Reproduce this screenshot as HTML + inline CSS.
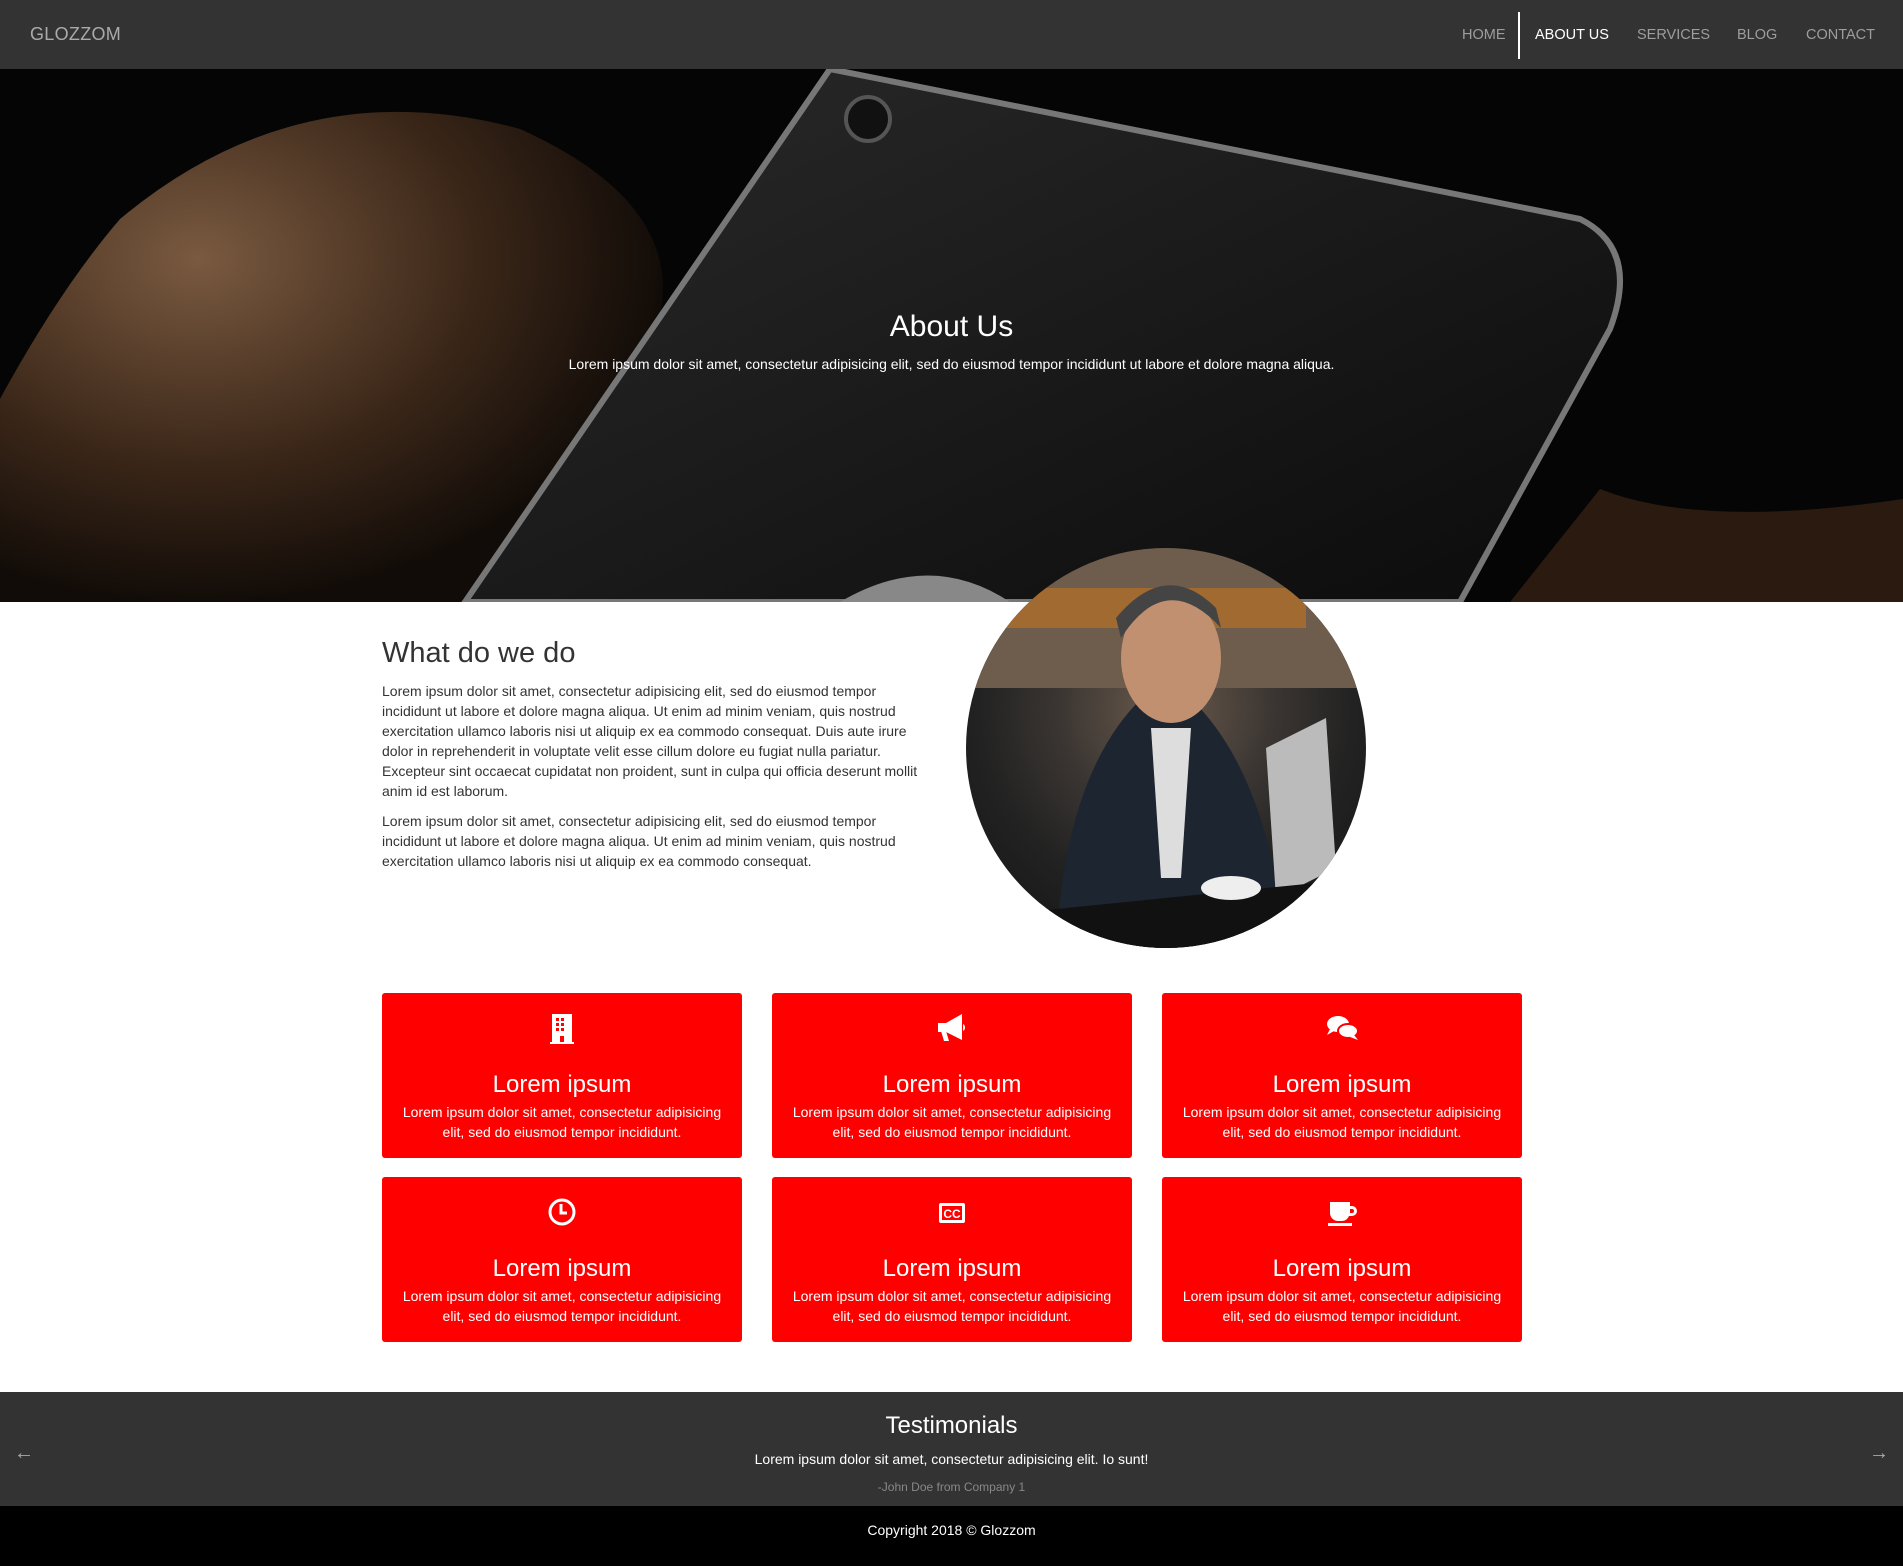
<!DOCTYPE html>
<html><head><meta charset="utf-8"><style>
*{margin:0;padding:0;box-sizing:border-box}
body{width:1903px;height:1566px;overflow:hidden;font-family:"Liberation Sans",Arial,sans-serif;background:#fff;position:relative}
.nav{position:absolute;top:0;left:0;width:1903px;height:69px;background:#333}
.logo{position:absolute;left:30px;top:24px;font-size:18px;color:#aaa;letter-spacing:.3px}
.nav a{position:absolute;top:27px;font-size:14.5px;color:#9d9d9d;text-decoration:none}
.bar{position:absolute;left:1518px;top:12px;width:2px;height:47px;background:#fff}
.hero{position:absolute;top:69px;left:0;width:1903px;height:533px;background:#050505;overflow:hidden}
.hero h1{position:absolute;top:241px;width:100%;text-align:center;color:#fff;font-weight:normal;font-size:30px}
.hero p{position:absolute;top:287px;width:100%;text-align:center;color:#fff;font-size:14px}
.sec h2{position:absolute;left:382px;top:637px;font-weight:normal;font-size:29px;color:#333}
.txt{position:absolute;left:382px;width:540px;font-size:14px;line-height:20px;color:#333}
.circ{position:absolute;left:966px;top:548px;width:400px;height:400px;border-radius:50%;overflow:hidden;background:radial-gradient(circle at 50% 40%,#6b5a4c 0,#3a3532 35%,#222 60%,#111 100%)}
.card{position:absolute;width:360px;height:165px;background:#f00;border-radius:3px;color:#fff;text-align:center}
.card svg{position:absolute;top:17px;left:162px}
.card h3{position:absolute;top:78px;width:100%;font-weight:normal;font-size:24px}
.card p{position:absolute;top:109px;left:10px;right:10px;font-size:14px;line-height:20px}
.test{position:absolute;top:1392px;left:0;width:1903px;height:114px;background:#333;color:#fff;text-align:center}
.foot{position:absolute;top:1506px;left:0;width:1903px;height:60px;background:#000;color:#fff;text-align:center;font-size:14px}
</style></head><body>
<div class="nav"><div class="logo">GLOZZOM</div>
<a style="left:1462px">HOME</a><div class="bar"></div><a style="left:1535px;color:#fff">ABOUT US</a><a style="left:1637px">SERVICES</a><a style="left:1737px">BLOG</a><a style="left:1806px">CONTACT</a></div>
<div class="hero">
<svg width="1903" height="533" style="position:absolute;left:0;top:0">
<defs><radialGradient id="r" cx="0.3" cy="0.3" r="0.7"><stop offset="0" stop-color="#7a5a40"/><stop offset="0.6" stop-color="#3a2618"/><stop offset="1" stop-color="#120c08"/></radialGradient>
<linearGradient id="p" x1="0" y1="0" x2="1" y2="1"><stop offset="0" stop-color="#2a2a2a"/><stop offset="1" stop-color="#0b0b0b"/></linearGradient></defs>
<path d="M120 150 Q300 0 520 60 Q720 150 640 300 Q600 420 500 533 L0 533 L0 330 Q60 220 120 150Z" fill="url(#r)"/>
<path d="M830 0 L1580 150 Q1640 180 1610 260 L1460 533 L465 533 Z" fill="url(#p)" stroke="#777" stroke-width="6"/>
<circle cx="868" cy="50" r="22" fill="#111" stroke="#555" stroke-width="4"/>
<path d="M1510 533 L1600 420 Q1700 460 1903 430 L1903 533Z" fill="#2a1a10"/>
<path d="M840 533 Q930 480 1010 533Z" fill="#888"/>
</svg>
<h1>About Us</h1>
<p>Lorem ipsum dolor sit amet, consectetur adipisicing elit, sed do eiusmod tempor incididunt ut labore et dolore magna aliqua.</p></div>
<div class="sec"><h2>What do we do</h2>
<div class="txt" style="top:681px">Lorem ipsum dolor sit amet, consectetur adipisicing elit, sed do eiusmod tempor incididunt ut labore et dolore magna aliqua. Ut enim ad minim veniam, quis nostrud exercitation ullamco laboris nisi ut aliquip ex ea commodo consequat. Duis aute irure dolor in reprehenderit in voluptate velit esse cillum dolore eu fugiat nulla pariatur. Excepteur sint occaecat cupidatat non proident, sunt in culpa qui officia deserunt mollit anim id est laborum.</div>
<div class="txt" style="top:811px">Lorem ipsum dolor sit amet, consectetur adipisicing elit, sed do eiusmod tempor incididunt ut labore et dolore magna aliqua. Ut enim ad minim veniam, quis nostrud exercitation ullamco laboris nisi ut aliquip ex ea commodo consequat.</div></div>
<div class="circ"><svg width="400" height="400">
<rect x="0" y="0" width="400" height="140" fill="#6e5c4c"/><rect x="40" y="40" width="300" height="40" fill="#a06a30"/>
<path d="M90 400 Q100 200 200 130 Q300 200 320 400Z" fill="#1c2530"/>
<ellipse cx="205" cy="110" rx="50" ry="65" fill="#c09070"/><path d="M155 90 Q200 20 255 80 L250 60 Q200 10 150 70Z" fill="#444"/>
<path d="M185 180 L225 180 L215 330 L195 330Z" fill="#ddd"/>
<path d="M300 200 L360 170 L370 320 L310 350Z" fill="#bbb"/>
<path d="M0 370 L400 330 L400 400 L0 400Z" fill="#111"/>
<ellipse cx="265" cy="340" rx="30" ry="12" fill="#eee"/>
</svg></div>
<div class="card" style="left:382px;top:993px"><svg width="36" height="36" viewBox="0 0 36 36" fill="#fff"><path d="M8 4h20v28h2v2H6v-2h2zM12 8v3h3V8zM17 8v3h3V8zM12 13v3h3v-3zM17 13v3h3v-3zM12 18v3h3v-3zM17 18v3h3v-3zM16 26v6h4v-6z" fill-rule="evenodd"/></svg><h3>Lorem ipsum</h3><p>Lorem ipsum dolor sit amet, consectetur adipisicing elit, sed do eiusmod tempor incididunt.</p></div>
<div class="card" style="left:772px;top:993px"><svg width="36" height="36" viewBox="0 0 36 36" fill="#fff"><path d="M4 13h8l16-9v26l-16-8H4z"/><path d="M7 21h5l3 10h-5z"/><path d="M29 14a4 4 0 010 7z"/></svg><h3>Lorem ipsum</h3><p>Lorem ipsum dolor sit amet, consectetur adipisicing elit, sed do eiusmod tempor incididunt.</p></div>
<div class="card" style="left:1162px;top:993px"><svg width="36" height="36" viewBox="0 0 36 36" fill="#fff"><ellipse cx="14" cy="14" rx="11" ry="8"/><path d="M6 19l-3 6 7-4z"/><ellipse cx="24" cy="21" rx="10" ry="7" stroke="#f00" stroke-width="2"/><path d="M30 25l4 5-8-3z"/></svg><h3>Lorem ipsum</h3><p>Lorem ipsum dolor sit amet, consectetur adipisicing elit, sed do eiusmod tempor incididunt.</p></div>
<div class="card" style="left:382px;top:1177px"><svg width="36" height="36" viewBox="0 0 36 36"><circle cx="18" cy="18" r="12" fill="none" stroke="#fff" stroke-width="3"/><path d="M17 10v9h6" fill="none" stroke="#fff" stroke-width="3"/></svg><h3>Lorem ipsum</h3><p>Lorem ipsum dolor sit amet, consectetur adipisicing elit, sed do eiusmod tempor incididunt.</p></div>
<div class="card" style="left:772px;top:1177px"><svg width="36" height="36" viewBox="0 0 36 36"><rect x="5" y="9" width="26" height="20" rx="2" fill="#fff"/><rect x="8" y="12" width="20" height="14" fill="#f00"/><text x="18" y="24" font-size="12" font-weight="bold" fill="#fff" text-anchor="middle" font-family="Liberation Sans">CC</text></svg><h3>Lorem ipsum</h3><p>Lorem ipsum dolor sit amet, consectetur adipisicing elit, sed do eiusmod tempor incididunt.</p></div>
<div class="card" style="left:1162px;top:1177px"><svg width="36" height="36" viewBox="0 0 36 36" fill="#fff"><path d="M6 8h20v4h2a5 5 0 010 10h-3a8 8 0 01-7 5h-4a8 8 0 01-8-8zM26 15v4h2a2 2 0 000-4zM4 29h24v3H4z"/></svg><h3>Lorem ipsum</h3><p>Lorem ipsum dolor sit amet, consectetur adipisicing elit, sed do eiusmod tempor incididunt.</p></div>
<div class="test"><div style="position:absolute;top:20px;width:100%;font-size:24px">Testimonials</div>
<div style="position:absolute;top:59px;width:100%;font-size:14px">Lorem ipsum dolor sit amet, consectetur adipisicing elit. Io sunt!</div>
<div style="position:absolute;top:88px;width:100%;font-size:12px;color:#888">-John Doe from Company 1</div>
<div style="position:absolute;left:14px;top:50px;font-size:20px;color:#aaa">&#8592;</div>
<div style="position:absolute;right:14px;top:50px;font-size:20px;color:#aaa">&#8594;</div></div>
<div class="foot"><div style="position:absolute;top:16px;width:100%">Copyright 2018 © Glozzom</div></div>
</body></html>
